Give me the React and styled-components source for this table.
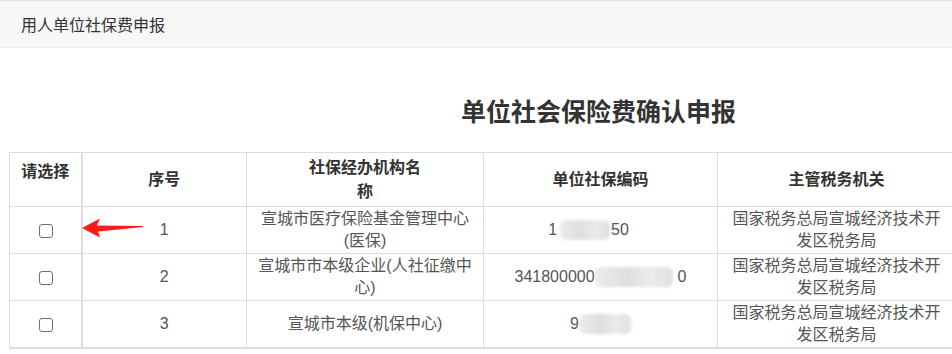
import React from "react";
import styled, { createGlobalStyle } from "styled-components";

const Global = createGlobalStyle`
  html, body {
    margin: 0;
    padding: 0;
    background: #ffffff;
    overflow: hidden;
  }
  body {
    font-family: "Liberation Sans", "Noto Sans CJK SC", sans-serif;
    color: #333;
  }
`;

const Page = styled.div`
  position: relative;
  width: 952px;
  height: 354px;
  overflow: hidden;
`;

const TopBar = styled.div`
  height: 46px;
  display: flex;
  align-items: center;
  padding-left: 21px;
  background: #f7f7f7;
  border-top: 1px solid #dde4ec;
  border-bottom: 1px solid #ececec;
  font-size: 16px;
  color: #333;
`;

const Heading = styled.h1`
  margin: 0;
  padding: 49px 0 0 461px;
  font-size: 25px;
  line-height: 30px;
  font-weight: 700;
  color: #333;
  white-space: nowrap;
`;

const Grid = styled.table`
  margin: 25px 0 0 9px;
  width: 946px;
  border-collapse: collapse;
  table-layout: fixed;
  border-bottom: 2px solid #dcdcdc;
`;

const Row = styled.tr`
  height: ${(p) => (p.$head ? "54px" : "47px")};
`;

const HeadCell = styled.th`
  box-sizing: border-box;
  border: 1px solid #dcdcdc;
  border-right-width: ${(p) => (p.$thick ? "2px" : "1px")};
  font-size: 16px;
  font-weight: 700;
  line-height: 24px;
  color: #333;
  text-align: center;
  vertical-align: ${(p) => (p.$top ? "top" : "middle")};
  padding: ${(p) => (p.$top ? "7px 0 0" : "0")};
`;

const Cell = styled.td`
  box-sizing: border-box;
  border: 1px solid #dcdcdc;
  border-right-width: ${(p) => (p.$thick ? "2px" : "1px")};
  font-size: 16px;
  line-height: 22px;
  color: #555;
  text-align: center;
  vertical-align: middle;
  padding: 0 4px;
`;

const Check = styled.input.attrs({ type: "checkbox" })`
  appearance: none;
  box-sizing: border-box;
  width: 14px;
  height: 14px;
  margin: 0 0 0 1px;
  border: 1px solid #6f6f6f;
  border-radius: 3px;
  background: #fff;
  vertical-align: middle;
`;

const Code = styled.span`
  display: inline-flex;
  align-items: center;
  white-space: nowrap;
  padding-right: ${(p) => p.$pr || 0}px;
`;

const Smudge = styled.span`
  display: inline-block;
  width: ${(p) => p.$w}px;
  height: 20px;
  margin: ${(p) => p.$m || "0"};
  background: linear-gradient(90deg, #ececec, #dedede 40%, #ebebeb 70%, #e0e0e0);
  filter: blur(1.5px);
  border-radius: 6px;
`;

const Pointer = styled.svg`
  position: absolute;
  left: 81px;
  top: 217px;
  width: 64px;
  height: 22px;
  overflow: visible;
`;

const rows = [
  {
    no: 1,
    name: (
      <>
        宣城市医疗保险基金管理中心
        <br />
        (医保)
      </>
    ),
    code: (
      <Code $pr={24}>
        1<Smudge $w={50} $m="0 1px 0 3px" />
        50
      </Code>
    ),
  },
  {
    no: 2,
    name: (
      <>
        宣城市市本级企业(人社征缴中
        <br />
        心)
      </>
    ),
    code: (
      <Code>
        341800000
        <Smudge $w={78} $m="0 5px 0 0" />0
      </Code>
    ),
  },
  {
    no: 3,
    name: <>宣城市本级(机保中心)</>,
    code: (
      <Code>
        9<Smudge $w={52} />
      </Code>
    ),
  },
];

export default function App() {
  return (
    <Page>
      <Global />
      <TopBar>用人单位社保费申报</TopBar>
      <Heading>单位社会保险费确认申报</Heading>
      <Grid>
        <colgroup>
          <col style={{ width: 72 }} />
          <col style={{ width: 165 }} />
          <col style={{ width: 237 }} />
          <col style={{ width: 234 }} />
          <col style={{ width: 238 }} />
        </colgroup>
        <thead>
          <Row $head>
            <HeadCell $top $thick>
              请选择
            </HeadCell>
            <HeadCell>序号</HeadCell>
            <HeadCell>
              社保经办机构名
              <br />称
            </HeadCell>
            <HeadCell>单位社保编码</HeadCell>
            <HeadCell>主管税务机关</HeadCell>
          </Row>
        </thead>
        <tbody>
          {rows.map((r) => (
            <Row key={r.no}>
              <Cell $thick>
                <Check />
              </Cell>
              <Cell>{r.no}</Cell>
              <Cell>{r.name}</Cell>
              <Cell>{r.code}</Cell>
              <Cell>
                国家税务总局宣城经济技术开
                <br />
                发区税务局
              </Cell>
            </Row>
          ))}
        </tbody>
      </Grid>
      <Pointer viewBox="0 0 64 22">
        <path
          d="M1 11 L19 1.5 L16 8.5 L62 9 L62 10 L17 14.5 L19 20.5 Z"
          fill="#ff1a1a"
        />
      </Pointer>
    </Page>
  );
}
